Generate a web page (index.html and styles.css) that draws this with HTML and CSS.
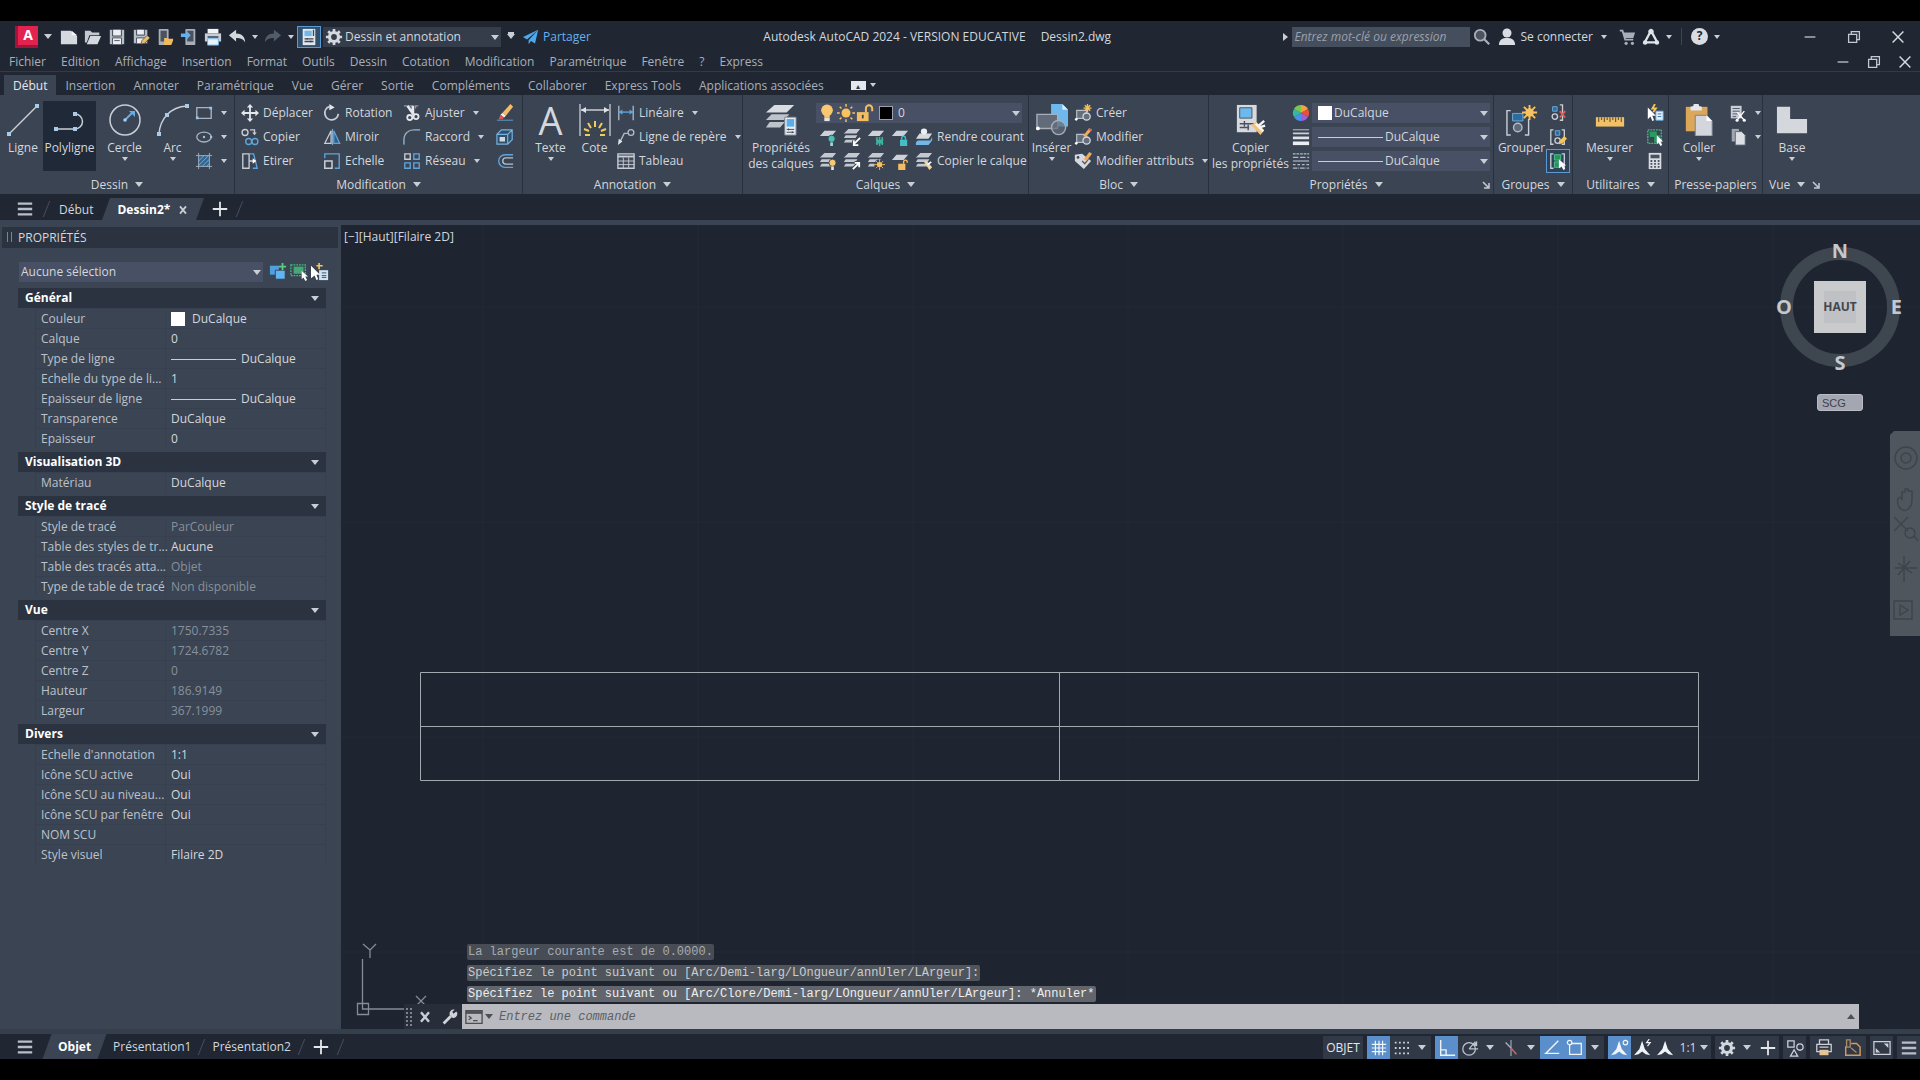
FILE: index.html
```
<!DOCTYPE html>
<html lang="fr">
<head>
    <meta charset="UTF-8">
    <meta name="viewport" content="width=device-width, initial-scale=1.0">
    <title>Autodesk AutoCAD 2024 - Dessin2.dwg</title>
    <link rel="stylesheet" href="styles.css">
</head>
<body>
    <!-- icon set -->
    <svg class="sprite" aria-hidden="true">
        <!-- quick access -->
        <symbol id="i-new" viewBox="0 0 20 20"><path d="M1 3h11l7 6v9H1z" fill="#d4d9e0"/><path d="M13 3l6 5h-6z" fill="#f2f4f7"/></symbol>
        <symbol id="i-open" viewBox="0 0 20 20"><path d="M1 3h6l2 2h8v3H6L3 16H1z" fill="#c4c9d1"/><path d="M7 9h12l-4 9H3z" fill="#d4d9e0"/></symbol>
        <symbol id="i-save" viewBox="0 0 20 20"><path d="M2 2h16v16H2z" fill="#b9bfc8"/><path d="M6 2h8v6H6zM5 11h10v7H5z" fill="#eceef2"/><path d="M5 2v7h10V2M5 18v-7h10v7M7 14h6" fill="none" stroke="#444c5a"/></symbol>
        <symbol id="i-saveas" viewBox="0 0 20 20"><path d="M2 2h15v15H2z" fill="#b9bfc8"/><path d="M6 2h7v5H6zM5 11h9v6H5z" fill="#eceef2"/><path d="M5 2v6h9V2M5 17v-6h9" fill="none" stroke="#444c5a"/><path d="M10 18l1-4 6-6 3 3-6 6z" fill="#e9bd6a" stroke="#2a313c" stroke-width=".7"/></symbol>
        <symbol id="i-webopen" viewBox="0 0 20 20"><rect x="3" y="1" width="11" height="18" rx="1" fill="#a9afb9"/><path d="M5 3h7v12H5z" fill="#4a5260"/><path d="M9 11h4l1 1h5v2l-2 5H9z" fill="#efb95c"/></symbol>
        <symbol id="i-websave" viewBox="0 0 20 20"><rect x="6" y="1" width="11" height="18" rx="1" fill="#a9afb9"/><path d="M8 3h7v12H8z" fill="#4a5260"/><path d="M1 6h6V3l5 5-5 5v-3H1z" fill="#64b0ec"/></symbol>
        <symbol id="i-print" viewBox="0 0 20 20"><path d="M4 1h12v5H4z" fill="#f1f3f5"/><path d="M1 6h18v9H1z" fill="#c9ced6"/><path d="M4 9h12v2H4z" fill="#4e5867"/><path d="M4 12h12v7H4z" fill="#e9f3fb" stroke="#6db4e6"/></symbol>
        <symbol id="i-undo" viewBox="0 0 20 20"><path d="M1 8l8-6v4c6 0 10 3 10 10-2-4-5-5-10-5v4z" fill="#d3d8df"/></symbol>
        <symbol id="i-redo" viewBox="0 0 20 20"><path d="M19 8l-8-6v4C5 6 1 9 1 16c2-4 5-5 10-5v4z" fill="#525b68"/></symbol>
        <symbol id="i-sheet" viewBox="0 0 20 20"><path d="M3 1h14v18H3z" fill="#e3e7ec"/><path d="M5 3h8v6H5z" fill="#6db9ee"/><path d="M15 2v7M5 12h10M5 15h10M8 11v2M12 14v2" stroke="#3b4656" stroke-width="1.5"/></symbol>
        <symbol id="i-gear" viewBox="0 0 20 20"><circle cx="10" cy="10" r="5" fill="none" stroke="currentColor" stroke-width="3.6"/><path d="M10 1v4M10 15v4M1 10h4M15 10h4M3.6 3.6l3 3M13.4 13.4l3 3M16.4 3.6l-3 3M6.6 13.4l-3 3" stroke="currentColor" stroke-width="3"/></symbol>
        <symbol id="i-plane" viewBox="0 0 20 20"><path d="M19 1L0 10l5 3zM19 1L7 14v5l3-4 5 3z" fill="#4fa8ea"/></symbol>
        <symbol id="i-search" viewBox="0 0 20 20"><circle cx="8" cy="8" r="6" fill="#4c5461" stroke="#a9afb9" stroke-width="2"/><path d="M12 12l6 6" stroke="#a9afb9" stroke-width="2.5"/></symbol>
        <symbol id="i-user" viewBox="0 0 20 20"><circle cx="10" cy="5.500" r="5" fill="#d9dde3"/><path d="M1 19c0-6 4-8 9-8s9 2 9 8z" fill="#d9dde3"/></symbol>
        <symbol id="i-cart" viewBox="0 0 20 20"><path d="M2 3h3l3 10h9" fill="none" stroke="#a9afb9" stroke-width="2"/><path d="M5.500 5H19l-2 6H7.500z" fill="#a9afb9"/><circle cx="9" cy="17" r="1.800" fill="#a9afb9"/><circle cx="16" cy="17" r="1.800" fill="#a9afb9"/></symbol>
        <symbol id="i-apps" viewBox="0 0 20 20"><path d="M10 3L3 16h14z" fill="none" stroke="#e1e5ea" stroke-width="2.5"/><circle cx="10" cy="4" r="3" fill="#e1e5ea"/><circle cx="3.5" cy="16" r="2.5" fill="#e1e5ea"/><circle cx="16.5" cy="16" r="2.5" fill="#e1e5ea"/></symbol>
        <symbol id="i-min" viewBox="0 0 20 20"><path d="M4 10h12" stroke="#c5cad2" stroke-width="1.4"/></symbol>
        <symbol id="i-restore" viewBox="0 0 20 20"><path d="M4 7h9v9H4zM7 7V4h9v9h-3" fill="none" stroke="#c5cad2" stroke-width="1.4"/></symbol>
        <symbol id="i-close" viewBox="0 0 20 20"><path d="M4 4l12 12M16 4L4 16" stroke="#d7dbe1" stroke-width="1.6"/></symbol>
        <!-- draw -->
        <symbol id="b-line" viewBox="0 0 32 32"><path d="M2 30L30 2" stroke="#c9ced7" stroke-width="1.5"/><path d="M0 28h4v4H0zM28 0h4v4h-4z" fill="#a8cbea"/></symbol>
        <symbol id="b-poly" viewBox="0 0 32 32"><path d="M1 25h20a7.500 7.500 0 0 0 0-15" fill="none" stroke="#c9ced7" stroke-width="1.5"/><path d="M0 23h4v4H0zM19 23h4v4h-4zM19 8h4v4h-4z" fill="#a8cbea"/></symbol>
        <symbol id="b-circle" viewBox="0 0 32 32"><circle cx="16" cy="16" r="15" fill="none" stroke="#c9ced7" stroke-width="1.5"/><path d="M16 16l8-8" stroke="#64aee8" stroke-width="2"/><path d="M20 7h6v6z" fill="#64aee8"/><circle cx="16" cy="16" r="1.8" fill="#a8cbea"/></symbol>
        <symbol id="b-arc" viewBox="0 0 32 32"><path d="M2 30C3 15 13 3 30 2" fill="none" stroke="#c9ced7" stroke-width="1.5"/><path d="M0 28h4v4H0zM8 9h4v4H8zM28 0h4v4h-4z" fill="#a8cbea"/></symbol>
        <symbol id="i-rect" viewBox="0 0 20 20"><path d="M2 4h16v12H2z" fill="none" stroke="#a9b3c1" stroke-width="1.5"/><path d="M1 14h3v3H1zM16 3h3v3h-3z" fill="#9cc4e6"/></symbol>
        <symbol id="i-ellipse" viewBox="0 0 20 20"><ellipse cx="10" cy="10" rx="8" ry="5.5" fill="none" stroke="#a9b3c1" stroke-width="1.5"/><circle cx="10" cy="10" r="1.3" fill="#9cc4e6"/><circle cx="18" cy="10" r="1.3" fill="#9cc4e6"/></symbol>
        <symbol id="i-hatch" viewBox="0 0 20 20"><path d="M4 4h12v12H4z" fill="#37658c"/><path d="M4 10l6-6M4 15L15 4M8 16l8-8M13 16l3-3" stroke="#68b4ee"/><path d="M4 1v18M16 1v18M1 4h18M1 16h18" stroke="#a9b3c1"/></symbol>
        <!-- modify -->
        <symbol id="i-move" viewBox="0 0 20 20"><path d="M10 2v16M2 10h16" stroke="#e4e7ec" stroke-width="2"/><path d="M10 0l3.500 4h-7zM10 20l3.500-4h-7zM0 10l4-3.500v7zM20 10l-4-3.500v7z" fill="#e4e7ec"/></symbol>
        <symbol id="i-copy" viewBox="0 0 20 20"><g fill="none" stroke="#c9ced7" stroke-width="1.5"><circle cx="4.500" cy="5" r="3.300"/><path d="M10 2h5v4"/></g><path d="M12.500 5h5L15 8z" fill="#c9ced7"/><g fill="none" stroke="#5fa5db" stroke-width="1.5"><circle cx="8.500" cy="15" r="3.300"/><circle cx="15.500" cy="15" r="3.300"/></g></symbol>
        <symbol id="i-stretch" viewBox="0 0 20 20"><path d="M2 2h7v16H2zM9 10h6" fill="none" stroke="#c9ced7" stroke-width="1.5"/><path d="M9 2h5l4 16h-5" fill="none" stroke="#5fa5db" stroke-width="1.5"/><path d="M13 7l4 3-4 3z" fill="#fff"/></symbol>
        <symbol id="i-rotate" viewBox="0 0 20 20"><path d="M7 3a7.500 7.500 0 1 0 10 8" fill="none" stroke="#c9ced7" stroke-width="2"/><path d="M7 0l6 4-6 3z" fill="#e4e7ec"/></symbol>
        <symbol id="i-mirror" viewBox="0 0 20 20"><path d="M9 3v14H2z" fill="none" stroke="#c9ced7" stroke-width="1.4"/><path d="M12 3l6.500 14H12z" fill="#2f5f86" stroke="#5fa5db" stroke-width="1.4"/><path d="M10.500 1v18" stroke="#93b9d8"/></symbol>
        <symbol id="i-scale" viewBox="0 0 20 20"><path d="M2 7V2h16v16h-5" fill="none" stroke="#5fa5db" stroke-width="1.5"/><path d="M2 10h8v8H2z" fill="none" stroke="#c9ced7" stroke-width="1.7"/></symbol>
        <symbol id="i-trim" viewBox="0 0 20 20"><path d="M1 2h18M14 2v3" stroke="#8b95a3" stroke-width="1.4" stroke-dasharray="4 2"/><path d="M5 2l7 10M11 2v9" stroke="#e4e7ec" stroke-width="3"/><g fill="none" stroke="#e4e7ec" stroke-width="2"><circle cx="7.500" cy="15" r="2.800"/><circle cx="14.500" cy="14" r="2.800"/></g></symbol>
        <symbol id="i-fillet" viewBox="0 0 20 20"><path d="M1 18v-5C1 6 6 2 12 2h7" fill="none" stroke="#9aa8b8" stroke-width="1.5"/><path d="M1 19v-6M13 2h6" stroke="#5fa5db"/></symbol>
        <symbol id="i-array" viewBox="0 0 20 20"><path d="M2 2h6v6H2z" fill="none" stroke="#c9ced7" stroke-width="1.5"/><path d="M12 2h6v6h-6zM2 12h6v6H2zM12 12h6v6h-6z" fill="none" stroke="#5fa5db" stroke-width="1.5"/></symbol>
        <symbol id="i-erase" viewBox="0 0 20 20"><path d="M1 18h18" stroke="#5fa5db"/><path d="M7 10L16 0l3 3-8 10z" fill="#f3bd68"/><path d="M7 10l4 3-2 2-4-3z" fill="#f4f4f4"/><path d="M5 12l4 3-2 2H3z" fill="#e1594c"/></symbol>
        <symbol id="i-explode" viewBox="0 0 20 20"><path d="M6 2h12v11l-5 5H1V7zM1 7h12v11M13 7l5-5" fill="#30516d" stroke="#75b2df" stroke-width="1.3"/><path d="M4 10h6v5H4z" fill="#d2d7de"/></symbol>
        <symbol id="i-offset" viewBox="0 0 20 20"><path d="M19 3h-9a7 7 0 0 0 0 14h9" fill="none" stroke="#5fa5db" stroke-width="1.5"/><path d="M19 6.500h-8a3.500 3.500 0 0 0 0 7h8" fill="none" stroke="#b7bfca" stroke-width="1.5"/></symbol>
        <!-- annotation -->
        <symbol id="b-dim" viewBox="0 0 32 32"><path d="M1 0v32M31 0v32M2 6h28" stroke="#c9ced7" stroke-width="1.3"/><path d="M2 6l5-3v6zM30 6l-5-3v6z" fill="#dfe3e8"/><path d="M16 17v6M9 19l3 5M23 19l-3 5M5 25l5 2M27 25l-5 2M6 31h5M21 31h5" stroke="#f2cc5b" stroke-width="2"/></symbol>
        <symbol id="i-linear" viewBox="0 0 20 20"><path d="M2 2v16M18 2v16" stroke="#b3bcc9" stroke-width="1.4"/><path d="M2 9h16" stroke="#5fa5db" stroke-width="1.5"/><path d="M2 9l4-3v6zM18 9l-4-3v6z" fill="#5fa5db"/></symbol>
        <symbol id="i-leader" viewBox="0 0 20 20"><circle cx="15.500" cy="5" r="3.200" fill="none" stroke="#b3bcc9" stroke-width="1.5"/><path d="M12 6H8L3 16" fill="none" stroke="#b3bcc9" stroke-width="1.5"/><path d="M1 19l1-7 4 3z" fill="#dfe3e8"/></symbol>
        <symbol id="i-table" viewBox="0 0 20 20"><path d="M1 2h18v16H1z" fill="#414b5a" stroke="#c9ced7" stroke-width="1.5"/><path d="M1 4h18v2H1z" fill="#c9ced7"/><path d="M1 10h18M1 14h18M7 6v12M13 6v12" stroke="#c9ced7"/></symbol>
        <!-- layers -->
        <symbol id="b-layers" viewBox="0 0 34 34"><path d="M10 1h21l-8 8H1z" fill="#d9dce1"/><path d="M7 11h19l-6 6H1zM5 19h16l-5 6H1z" fill="#bfc4cb"/><path d="M21 14h12v19H21z" fill="#e8ebef" stroke="#7d8794"/><path d="M23 16h8v8h-8z" fill="#58aeea"/><path d="M23 27h8M23 30h8M25 26v2M29 29v2" stroke="#3c4655"/></symbol>
        <symbol id="i-bulb" viewBox="0 0 20 20"><circle cx="10" cy="7" r="6.500" fill="#f9c672"/><path d="M7 12h6v3H7z" fill="#f9c672"/><path d="M7 15h6v4H7z" fill="#e6e3dc"/></symbol>
        <symbol id="i-sun" viewBox="0 0 20 20"><circle cx="10" cy="10" r="5" fill="#f9c25f"/><path d="M10 0v3M10 17v3M0 10h3M17 10h3M3 3l2 2M15 15l2 2M17 3l-2 2M5 15l-2 2" stroke="#f9c25f" stroke-width="1.6"/></symbol>
        <symbol id="i-unlock" viewBox="0 0 20 20"><path d="M1 9h13v10H1z" fill="#f3bd62"/><path d="M11 9V5a3.500 3.500 0 0 1 7 0v3" fill="none" stroke="#f3bd62" stroke-width="2.2"/><path d="M7.500 12v4" stroke="#3b4453" stroke-width="2"/></symbol>
        <symbol id="i-one" viewBox="0 0 20 20"><path d="M6 3h13l-5 6H1z" fill="#cdd2d9"/></symbol>
        <symbol id="i-stack" viewBox="0 0 20 20"><path d="M6 1h13l-4 5H1zM3 8h13l-2 3H1zM3 13h12l-2 3H1z" fill="#c4c9d1"/></symbol>
        <symbol id="i-loff" viewBox="0 0 20 20"><use href="#i-one"/><circle cx="14" cy="12" r="4" fill="#4ac0b4" stroke="#3b4453"/><path d="M12.500 16h3v4h-3z" fill="#9edbd4"/></symbol>
        <symbol id="i-liso" viewBox="0 0 20 20"><use href="#i-stack"/><path d="M19 11l-7 7M12 14v5h5" fill="none" stroke="#3b4453" stroke-width="4"/><path d="M19 11l-7 7M12 14v5h5" fill="none" stroke="#fff" stroke-width="2"/></symbol>
        <symbol id="i-lfreeze" viewBox="0 0 20 20"><use href="#i-one"/><path d="M14 10v10M10 12l8 6M18 12l-8 6M11 10v9M17 10v9" stroke="#3db39f" stroke-width="1.7"/></symbol>
        <symbol id="i-llock" viewBox="0 0 20 20"><use href="#i-one"/><path d="M10 13h8v7h-8z" fill="#45bfc3"/><path d="M12 13v-2a2 2 0 0 1 4 0v2" fill="none" stroke="#45bfc3" stroke-width="1.6"/></symbol>
        <symbol id="i-lcur" viewBox="0 0 20 20"><path d="M5 6h14l-4 6H1z" fill="#d5dae0"/><path d="M3 14h14l2-4v4l-4 5H1v-3z" fill="#72b7e8"/><circle cx="10" cy="4" r="3.500" fill="#eceff2"/></symbol>
        <symbol id="i-lon" viewBox="0 0 20 20"><use href="#i-stack"/><circle cx="15" cy="12" r="4" fill="#f9c672" stroke="#3b4453"/><path d="M13.500 16h3v4h-3z" fill="#e6e3dc"/></symbol>
        <symbol id="i-luniso" viewBox="0 0 20 20"><use href="#i-stack"/><path d="M11 19l7-7M13 12h5v5" fill="none" stroke="#3b4453" stroke-width="4"/><path d="M11 19l7-7M13 12h5v5" fill="none" stroke="#fff" stroke-width="2"/></symbol>
        <symbol id="i-lthaw" viewBox="0 0 20 20"><use href="#i-stack"/><circle cx="14" cy="14" r="6" fill="#3b4453"/><circle cx="14" cy="14" r="3" fill="#f9c25f"/><path d="M14 8v3M14 17v3M8 14h3M17 14h3M10 10l2 2M18 10l-2 2M10 18l2-2M18 18l-2-2" stroke="#f9c25f"/></symbol>
        <symbol id="i-lunlock" viewBox="0 0 20 20"><use href="#i-one"/><path d="M8 13h8v7H8z" fill="#f3bd62"/><path d="M14 13v-2a2 2 0 0 1 4 0v1" fill="none" stroke="#f3bd62" stroke-width="1.6"/></symbol>
        <symbol id="i-lmatch" viewBox="0 0 20 20"><use href="#i-stack"/><path d="M10 11l3-1 6 7-3 3z" fill="#f0d7a4"/><path d="M14 14l4-3" stroke="#fff" stroke-width="2"/></symbol>
        <!-- block -->
        <symbol id="b-insert" viewBox="0 0 34 34"><path d="M16 0h12l6 6v18H16z" fill="#6db9ee"/><path d="M28 0v6h6z" fill="#d7ecfa"/><path d="M1 11h22v15H1z" fill="#626b79" stroke="#a7aeb9" stroke-width="1.5"/><circle cx="24" cy="25" r="7.500" fill="#626b79" fill-opacity=".7" stroke="#a7aeb9" stroke-width="1.5"/><circle cx="2" cy="26" r="2" fill="#fff"/></symbol>
        <symbol id="i-blk" viewBox="0 0 20 20"><path d="M3 7h11v9H3z" fill="#646e7c" stroke="#b7bec8" stroke-width="1.3"/><circle cx="14" cy="14" r="4" fill="#646e7c" stroke="#d5d9df" stroke-width="1.4"/><circle cx="2.500" cy="17" r="1.500" fill="#fff"/></symbol>
        <symbol id="i-bcreate" viewBox="0 0 20 20"><use href="#i-blk"/><path d="M15 0v9M10.500 4.500h9M12 1.500l6 6M18 1.500l-6 6" stroke="#f6bf5c" stroke-width="1.5"/></symbol>
        <symbol id="i-bedit" viewBox="0 0 20 20"><use href="#i-blk"/><path d="M10 9l7-9 3 2-7 8z" fill="#f1ab57"/><path d="M17 0l3 2-1 2-3-2z" fill="#e35e4f"/></symbol>
        <symbol id="i-battr" viewBox="0 0 20 20"><path d="M1 3l8-1 10 8-8 9L1 10z" fill="#d6dae0"/><circle cx="4.500" cy="6" r="1.500" fill="#3b4453"/><path d="M9 10l3 3 4-5" fill="none" stroke="#4e5867" stroke-width="1.5"/><path d="M11 8l6-8 3 2-6 8z" fill="#f1ab57"/></symbol>
        <!-- properties -->
        <symbol id="b-match" viewBox="0 0 34 34"><path d="M2 1h21v29H2z" fill="#d6d9de"/><path d="M5 4h13v11H5z" fill="#6db9ee" stroke="#4a5260"/><path d="M5 21h15M5 25h10M10 18v6M14 22v6" stroke="#4a5260" stroke-width="1.5"/><path d="M17 22l6-3 8 9-4 5z" fill="#f1c27a"/><path d="M24 24l7-6M25 25l7-2M22 21l8 8" stroke="#f4f5f7" stroke-width="2.5"/></symbol>
        <symbol id="i-wheel" viewBox="0 0 20 20"><path d="M10 10V1a9 9 0 0 1 7.800 4.500z" fill="#f2a33b"/><path d="M10 10l7.800-4.500a9 9 0 0 1 0 9z" fill="#e8503e"/><path d="M10 10l7.800 4.500A9 9 0 0 1 10 19z" fill="#a15fd0"/><path d="M10 10v9a9 9 0 0 1-7.800-4.500z" fill="#4a8fe8"/><path d="M10 10l-7.800 4.500a9 9 0 0 1 0-9z" fill="#35b8a4"/><path d="M10 10L2.200 5.500A9 9 0 0 1 10 1z" fill="#7bc650"/></symbol>
        <symbol id="i-weight" viewBox="0 0 20 20"><path d="M1 2h18" stroke="#c9ced7"/><path d="M1 6h18" stroke="#c9ced7" stroke-width="2"/><path d="M1 11h18" stroke="#dfe3e8" stroke-width="3"/><path d="M1 17h18" stroke="#eceff2" stroke-width="4"/></symbol>
        <symbol id="i-ltype" viewBox="0 0 20 20"><g stroke="#b3bac5" stroke-width="1.3"><path d="M1 2h18" stroke-dasharray="3 1"/><path d="M1 6h18" stroke-dasharray="6 2"/><path d="M1 10h18"/><path d="M1 14h18" stroke-dasharray="3 2"/><path d="M1 18h18" stroke-dasharray="5 1 1 1"/></g></symbol>
        <!-- groups -->
        <symbol id="b-group" viewBox="0 0 34 34"><path d="M5 7H1v26h4M20 33h4V16" fill="none" stroke="#c9ced7" stroke-width="1.5"/><path d="M7 10h11v8H7z" fill="#2f6c9e" stroke="#6db0df"/><circle cx="12.500" cy="25" r="4.500" fill="#5f6977" stroke="#b3bac5" stroke-width="1.5"/><path d="M25 1v16M17 9h16M19 3l12 12M31 3L19 15" stroke="#f8c261" stroke-width="2"/><circle cx="25" cy="9" r="4.500" fill="#f8c261"/></symbol>
        <symbol id="i-grp" viewBox="0 0 20 20"><path d="M5 2H2v16h3M14 2h3v16h-3" fill="none" stroke="#c9ced7" stroke-width="1.5"/><path d="M7 3h5v5H7z" fill="#2f6c9e" stroke="#6db0df"/><circle cx="9.500" cy="14" r="3" fill="none" stroke="#c9ced7" stroke-width="1.5"/></symbol>
        <symbol id="i-ungroup" viewBox="0 0 20 20"><path d="M12 1h3v17h-3" fill="none" stroke="#c9ced7" stroke-width="1.5"/><path d="M4 3h5v5H4z" fill="#2f6c9e" stroke="#6db0df"/><circle cx="6.500" cy="14" r="3" fill="none" stroke="#c9ced7" stroke-width="1.5"/><path d="M12 8l6 7M18 8l-6 7" stroke="#e75b50" stroke-width="2"/></symbol>
        <symbol id="i-gedit" viewBox="0 0 20 20"><use href="#i-grp"/><path d="M11 18l1-4 5-5 3 3-5 5z" fill="#f4c65d"/></symbol>
        <symbol id="i-gsel" viewBox="0 0 20 20"><path d="M5 2H2v16h3M14 2h3v16" fill="none" stroke="#c9ced7" stroke-width="1.5"/><path d="M6 3h7v6H6zM6 11h7v6H6z" fill="#27935e" stroke="#4fc98b"/><path d="M11 8v10l3-2 2 4 2-1-2-4h3z" fill="#fff"/></symbol>
        <!-- utilities -->
        <symbol id="b-ruler" viewBox="0 0 34 34"><path d="M2 14h30v10H2z" fill="#f2c167"/><path d="M5 14v5M8 14v3M11 14v5M14 14v3M17 14v5M20 14v3M23 14v5M26 14v3M29 14v5" stroke="#6a5530" stroke-width="1.2"/></symbol>
        <symbol id="i-quick" viewBox="0 0 20 20"><path d="M11 8h8v10h-8z" fill="#e6f0fa" stroke="#69b0e6"/><path d="M13 11h4M13 14h4" stroke="#2f6c9e"/><path d="M10 0L7 5h4L8 9" fill="none" stroke="#f4c65d" stroke-width="2"/><path d="M2 4v13l3-3 2 5 2-1-2-5h4z" fill="#fff"/></symbol>
        <symbol id="i-selall" viewBox="0 0 20 20"><path d="M2 2h15v15H2z" fill="none" stroke="#3fbb79" stroke-width="1.5" stroke-dasharray="2 1"/><path d="M4 4h8v6H4zM9 8h7v8H9z" fill="#2a9a60"/><path d="M12 8v10l2-2 2 4 2-1-2-4h3z" fill="#fff"/></symbol>
        <symbol id="i-calc" viewBox="0 0 20 20"><path d="M3 1h14v18H3z" fill="#d9dce1"/><path d="M5 3h10v4H5z" fill="#4a5260"/><path d="M6 9v9M10 9v9M14 9v9" stroke="#4a5260" stroke-width="2" stroke-dasharray="2 1.3"/></symbol>
        <!-- clipboard and view -->
        <symbol id="b-paste" viewBox="0 0 34 34"><path d="M3 3h23v26H3z" fill="#dda75a"/><path d="M8 3l3-1a3 3 0 0 1 6 0l3 1v4H8z" fill="#e4e7ec"/><path d="M13 12h12l6 6v16H13z" fill="#d3d7dd" stroke="#747e8b"/><path d="M25 12v6h6z" fill="#fff"/></symbol>
        <symbol id="i-cut" viewBox="0 0 20 20"><path d="M2 2h12v14H2z" fill="#c9ced7"/><path d="M4 5h8M4 8h8M4 11h6M4 14h4" stroke="#4a5260"/><path d="M9 9l8 9M17 8l-8 10" stroke="#fff" stroke-width="1.5"/><circle cx="9" cy="18" r="1.700" fill="#fff"/><circle cx="17" cy="18" r="1.700" fill="#fff"/></symbol>
        <symbol id="i-copyclip" viewBox="0 0 20 20"><path d="M3 1h8v14H3z" fill="#9fa6b1"/><path d="M7 4h7l4 4v11H7z" fill="#dcdfe4" stroke="#59626f"/></symbol>
        <symbol id="b-base" viewBox="0 0 34 34"><path d="M1 3h14v13h18v15H1z" fill="#d4d8dd"/></symbol>
        <!-- property palette -->
        <symbol id="i-ptog" viewBox="0 0 20 20"><path d="M1 3h10v10H1z" fill="#4fa0e0"/><path d="M7 8h11v10H7z" fill="#63b5f2" stroke="#34404f"/><path d="M15 0v8M11 4h8" stroke="#58cf7f" stroke-width="2"/></symbol>
        <symbol id="i-psel" viewBox="0 0 20 20"><path d="M1 2h16v12H1z" fill="none" stroke="#3fbb79" stroke-width="1.5" stroke-dasharray="2 1"/><path d="M4 4h11v8H4z" fill="#45a876"/><path d="M13 9v9l2-2 2 4 2-1-2-4h3z" fill="#fff"/></symbol>
        <symbol id="i-pquick" viewBox="0 0 20 20"><path d="M9 8h10v11H9z" fill="#cfe3f5"/><path d="M12 11h5M12 14h5M12 16h5" stroke="#30465e"/><path d="M9 0v7M6 3h7" stroke="#f4c65d" stroke-width="1.8"/><path d="M0 3v14l4-3 2 5 2-1-2-5h4z" fill="#fff"/></symbol>
        <!-- status bar -->
        <symbol id="s-grid" viewBox="0 0 20 20"><path d="M6 2v16M10 2v16M14 2v16M2 6h16M2 10h16M2 14h16" stroke="#f0f4f8" stroke-width="1.3"/></symbol>
        <symbol id="s-snap" viewBox="0 0 20 20"><path d="M2 4h16M2 10h16M2 16h16" stroke="#cdd2da" stroke-width="2" stroke-dasharray="2 2.6"/></symbol>
        <symbol id="s-ortho" viewBox="0 0 20 20"><path d="M3 1v17h16M3 12h6v6" fill="none" stroke="#f0f4f8" stroke-width="1.5"/></symbol>
        <symbol id="s-polar" viewBox="0 0 20 20"><circle cx="9" cy="11" r="7" fill="none" stroke="#bfc5ce" stroke-width="1.4"/><path d="M9 11h10M9 11l7-8" stroke="#bfc5ce" stroke-width="1.4"/><path d="M13 7l5-5v6z" fill="#bfc5ce"/></symbol>
        <symbol id="s-iso" viewBox="0 0 20 20"><path d="M10 1v18" stroke="#8fa0b0" stroke-width="1.4"/><path d="M4 4l6 6" stroke="#a9b0bb" stroke-width="1.5"/><path d="M10 10l6 7" stroke="#d0665f" stroke-width="1.6"/></symbol>
        <symbol id="s-track" viewBox="0 0 20 20"><path d="M17 2L3 16h15" fill="none" stroke="#f0f4f8" stroke-width="1.5"/></symbol>
        <symbol id="s-osnap" viewBox="0 0 20 20"><path d="M4 5h13v12H4z" fill="none" stroke="#f0f4f8" stroke-width="1.4"/><circle cx="4" cy="4" r="2.500" fill="#5b8fcb" stroke="#f0f4f8" stroke-width="1.3"/></symbol>
        <symbol id="s-ann" viewBox="0 0 20 20"><path d="M9 2l3 9 6 7-5-1-4-3-4 3-5 1 6-7z" fill="#f0f4f8"/></symbol>
        <symbol id="s-ann1" viewBox="0 0 20 20"><use href="#s-ann"/><circle cx="16" cy="4" r="2.500" fill="none" stroke="#f0f4f8" stroke-width="1.3"/></symbol>
        <symbol id="s-ann2" viewBox="0 0 20 20"><use href="#s-ann"/><path d="M17 0l-3 4h4l-3 4" fill="none" stroke="#f0f4f8" stroke-width="1.3"/></symbol>
        <symbol id="s-plus" viewBox="0 0 20 20"><path d="M10 2v16M2 10h16" stroke="#e4e7ec" stroke-width="2"/></symbol>
        <symbol id="s-shapes" viewBox="0 0 20 20"><g fill="none" stroke="#cdd2da" stroke-width="1.4"><path d="M2 2h7v7H2zM9 12l4 7H5z"/><circle cx="15.500" cy="9" r="3.500"/></g></symbol>
        <symbol id="s-print" viewBox="0 0 20 20"><path d="M5 6V1h10v5M2 6h16v8H2zM5 9h10" fill="none" stroke="#cdd2da" stroke-width="1.4"/><path d="M5 12h10v6H5z" fill="#e7c497"/></symbol>
        <symbol id="s-link" viewBox="0 0 20 20"><path d="M3 8v10h16V9l-4-4H9" fill="none" stroke="#d09c5f" stroke-width="1.6"/><path d="M4 1h4v8H4zM9 10l6 5" fill="none" stroke="#a98a66" stroke-width="1.5"/></symbol>
        <symbol id="s-full" viewBox="0 0 20 20"><path d="M1 3h18v14H1z" fill="none" stroke="#cdd2da" stroke-width="1.4"/><path d="M12 5h5v5zM3 10v5h5z" fill="#cdd2da"/></symbol>
        <symbol id="i-burger" viewBox="0 0 20 20"><path d="M2 4h16M2 10h16M2 16h16" stroke="#b9bfc9" stroke-width="2.6"/></symbol>
        <symbol id="i-x" viewBox="0 0 20 20"><path d="M5 4l10 12M15 4L5 16" stroke="#c9ced6" stroke-width="3"/></symbol>
        <symbol id="i-wrench" viewBox="0 0 20 20"><path d="M2 18l9-9" stroke="#d0d4da" stroke-width="3.5"/><path d="M18 3l-4 3-1-3 3-2a5 5 0 0 0-6 7l3 3a5 5 0 0 0 5-8z" fill="#d0d4da"/></symbol>
        <symbol id="i-term" viewBox="0 0 20 20"><path d="M1 3h18v14H1z" fill="none" stroke="#4c4f54" stroke-width="1.5"/><path d="M1 5h18" stroke="#4c4f54" stroke-width="3"/><path d="M4 9l3 2-3 2M9 14h5" fill="none" stroke="#4c4f54" stroke-width="1.4"/></symbol>
        <symbol id="i-dlg" viewBox="0 0 10 10"><path d="M2 2l5 5M8 3v5H3" fill="none" stroke="#c5cad2" stroke-width="1.5"/></symbol>
    </svg>

    <div class="app">
        <header class="titlebar">
            <div class="quick">
                <button class="logo" aria-label="Application">A</button>
                <button class="drop" aria-label="Menu"><i class="caret"></i></button>
                <button class="slot" aria-label="Nouveau"><svg class="ico"><use href="#i-new"/></svg></button>
                <button class="slot" aria-label="Ouvrir"><svg class="ico"><use href="#i-open"/></svg></button>
                <button class="slot" aria-label="Enregistrer"><svg class="ico"><use href="#i-save"/></svg></button>
                <button class="slot" aria-label="Enregistrer sous"><svg class="ico"><use href="#i-saveas"/></svg></button>
                <button class="slot" aria-label="Ouvrir depuis le Web"><svg class="ico"><use href="#i-webopen"/></svg></button>
                <button class="slot" aria-label="Enregistrer sur le Web"><svg class="ico"><use href="#i-websave"/></svg></button>
                <button class="slot" aria-label="Tracer"><svg class="ico"><use href="#i-print"/></svg></button>
                <button class="slot" aria-label="Annuler"><svg class="ico"><use href="#i-undo"/></svg></button>
                <button class="drop" aria-label="Historique"><i class="caret small"></i></button>
                <button class="slot" aria-label="Rétablir"><svg class="ico"><use href="#i-redo"/></svg></button>
                <button class="drop" aria-label="Historique"><i class="caret small"></i></button>
                <button class="slot on" aria-label="Feuilles"><svg class="ico"><use href="#i-sheet"/></svg></button>
                <label class="combo workspace">
                    <svg class="ico"><use href="#i-gear"/></svg>
                    <select aria-label="Espace de travail"><option>Dessin et annotation</option></select>
                </label>
                <button class="drop more" aria-label="Personnaliser"><i class="caret"></i></button>
                <a class="share" href="#"><svg class="ico"><use href="#i-plane"/></svg>Partager</a>
            </div>
            <div class="doc-title"><span>Autodesk AutoCAD 2024 - VERSION EDUCATIVE</span><span>Dessin2.dwg</span></div>
            <div class="account">
                <i class="caret side"></i>
                <input class="search" type="text" aria-label="Rechercher" placeholder="Entrez mot-clé ou expression">
                <button class="slot" aria-label="Rechercher"><svg class="ico"><use href="#i-search"/></svg></button>
                <button class="login"><svg class="ico"><use href="#i-user"/></svg>Se connecter</button>
                <button class="drop wide" aria-label="Compte"><i class="caret small"></i></button>
                <button class="slot" aria-label="Boutique"><svg class="ico"><use href="#i-cart"/></svg></button>
                <button class="slot" aria-label="Applications"><svg class="ico"><use href="#i-apps"/></svg></button>
                <button class="drop" aria-label="Applications"><i class="caret small"></i></button>
                <button class="help" aria-label="Aide"><span>?</span></button>
                <button class="drop" aria-label="Aide"><i class="caret small"></i></button>
                <div class="win-buttons">
                    <button aria-label="Réduire"><svg class="ico"><use href="#i-min"/></svg></button>
                    <button aria-label="Restaurer"><svg class="ico"><use href="#i-restore"/></svg></button>
                    <button aria-label="Fermer"><svg class="ico"><use href="#i-close"/></svg></button>
                </div>
            </div>
        </header>

        <div class="menubar">
            <nav>
                <a href="#">Fichier</a><a href="#">Edition</a><a href="#">Affichage</a><a href="#">Insertion</a><a href="#">Format</a><a href="#">Outils</a><a href="#">Dessin</a><a href="#">Cotation</a><a href="#">Modification</a><a href="#">Paramétrique</a><a href="#">Fenêtre</a><a href="#">?</a><a href="#">Express</a>
            </nav>
            <div class="win-buttons doc">
                <button aria-label="Réduire"><svg class="ico"><use href="#i-min"/></svg></button>
                <button aria-label="Restaurer"><svg class="ico"><use href="#i-restore"/></svg></button>
                <button aria-label="Fermer"><svg class="ico"><use href="#i-close"/></svg></button>
            </div>
        </div>

        <nav class="ribbon-tabs">
            <a class="active" href="#">Début</a><a href="#">Insertion</a><a href="#">Annoter</a><a href="#">Paramétrique</a><a href="#">Vue</a><a href="#">Gérer</a><a href="#">Sortie</a><a href="#">Compléments</a><a href="#">Collaborer</a><a href="#">Express Tools</a><a href="#">Applications associées</a>
            <button class="collapse" aria-label="Réduire le ruban"><span>▴</span><i class="caret small"></i></button>
        </nav>

        <div class="ribbon">
            <section class="panel draw">
                <div class="panel-body">
                    <button class="big"><svg><use href="#b-line"/></svg>Ligne</button>
                    <button class="big pressed"><svg><use href="#b-poly"/></svg>Polyligne</button>
                    <button class="big"><svg><use href="#b-circle"/></svg>Cercle<i class="caret small"></i></button>
                    <button class="big"><svg><use href="#b-arc"/></svg>Arc<i class="caret small"></i></button>
                    <div class="col">
                        <button class="cmd" aria-label="Rectangle"><svg class="ico"><use href="#i-rect"/></svg><i class="caret small"></i></button>
                        <button class="cmd" aria-label="Ellipse"><svg class="ico"><use href="#i-ellipse"/></svg><i class="caret small"></i></button>
                        <button class="cmd" aria-label="Hachures"><svg class="ico"><use href="#i-hatch"/></svg><i class="caret small"></i></button>
                    </div>
                </div>
                <button class="panel-title">Dessin<i class="caret"></i></button>
            </section>

            <section class="panel modify">
                <div class="panel-body">
                    <div class="col">
                        <button class="cmd"><svg class="ico"><use href="#i-move"/></svg>Déplacer</button>
                        <button class="cmd"><svg class="ico"><use href="#i-copy"/></svg>Copier</button>
                        <button class="cmd"><svg class="ico"><use href="#i-stretch"/></svg>Etirer</button>
                    </div>
                    <div class="col">
                        <button class="cmd"><svg class="ico"><use href="#i-rotate"/></svg>Rotation</button>
                        <button class="cmd"><svg class="ico"><use href="#i-mirror"/></svg>Miroir</button>
                        <button class="cmd"><svg class="ico"><use href="#i-scale"/></svg>Echelle</button>
                    </div>
                    <div class="col">
                        <button class="cmd"><svg class="ico"><use href="#i-trim"/></svg>Ajuster<i class="caret small"></i></button>
                        <button class="cmd"><svg class="ico"><use href="#i-fillet"/></svg>Raccord<i class="caret small"></i></button>
                        <button class="cmd"><svg class="ico"><use href="#i-array"/></svg>Réseau<i class="caret small"></i></button>
                    </div>
                    <div class="col">
                        <button class="cmd" aria-label="Effacer"><svg class="ico"><use href="#i-erase"/></svg></button>
                        <button class="cmd" aria-label="Décomposer"><svg class="ico"><use href="#i-explode"/></svg></button>
                        <button class="cmd" aria-label="Décaler"><svg class="ico"><use href="#i-offset"/></svg></button>
                    </div>
                </div>
                <button class="panel-title">Modification<i class="caret"></i></button>
            </section>

            <section class="panel annotate">
                <div class="panel-body">
                    <button class="big"><span class="letter">A</span>Texte<i class="caret small"></i></button>
                    <button class="big"><svg><use href="#b-dim"/></svg>Cote</button>
                    <div class="col">
                        <button class="cmd"><svg class="ico"><use href="#i-linear"/></svg>Linéaire<i class="caret small"></i></button>
                        <button class="cmd"><svg class="ico"><use href="#i-leader"/></svg>Ligne de repère<i class="caret small"></i></button>
                        <button class="cmd"><svg class="ico"><use href="#i-table"/></svg>Tableau</button>
                    </div>
                </div>
                <button class="panel-title">Annotation<i class="caret"></i></button>
            </section>

            <section class="panel layers">
                <div class="panel-body">
                    <button class="big"><svg><use href="#b-layers"/></svg>Propriétés<br>des calques</button>
                    <div class="col">
                        <label class="combo layer">
                            <svg class="ico"><use href="#i-bulb"/></svg>
                            <svg class="ico"><use href="#i-sun"/></svg>
                            <svg class="ico"><use href="#i-unlock"/></svg>
                            <span class="swatch black"></span>
                            <select aria-label="Calque courant"><option>0</option></select>
                        </label>
                        <div class="tools">
                            <button class="slot" aria-label="Désactiver"><svg class="ico"><use href="#i-loff"/></svg></button>
                            <button class="slot" aria-label="Isoler"><svg class="ico"><use href="#i-liso"/></svg></button>
                            <button class="slot" aria-label="Geler"><svg class="ico"><use href="#i-lfreeze"/></svg></button>
                            <button class="slot" aria-label="Verrouiller"><svg class="ico"><use href="#i-llock"/></svg></button>
                            <button class="cmd"><svg class="ico"><use href="#i-lcur"/></svg>Rendre courant</button>
                        </div>
                        <div class="tools">
                            <button class="slot" aria-label="Activer"><svg class="ico"><use href="#i-lon"/></svg></button>
                            <button class="slot" aria-label="Annuler l'isolation"><svg class="ico"><use href="#i-luniso"/></svg></button>
                            <button class="slot" aria-label="Libérer"><svg class="ico"><use href="#i-lthaw"/></svg></button>
                            <button class="slot" aria-label="Déverrouiller"><svg class="ico"><use href="#i-lunlock"/></svg></button>
                            <button class="cmd"><svg class="ico"><use href="#i-lmatch"/></svg>Copier le calque</button>
                        </div>
                    </div>
                </div>
                <button class="panel-title">Calques<i class="caret"></i></button>
            </section>

            <section class="panel block">
                <div class="panel-body">
                    <button class="big"><svg><use href="#b-insert"/></svg>Insérer<i class="caret small"></i></button>
                    <div class="col">
                        <button class="cmd"><svg class="ico"><use href="#i-bcreate"/></svg>Créer</button>
                        <button class="cmd"><svg class="ico"><use href="#i-bedit"/></svg>Modifier</button>
                        <button class="cmd"><svg class="ico"><use href="#i-battr"/></svg>Modifier attributs<i class="caret small"></i></button>
                    </div>
                </div>
                <button class="panel-title">Bloc<i class="caret"></i></button>
            </section>

            <section class="panel props">
                <div class="panel-body">
                    <button class="big"><svg><use href="#b-match"/></svg>Copier<br>les propriétés</button>
                    <div class="col">
                        <div class="prop-line"><svg class="ico"><use href="#i-wheel"/></svg>
                            <label class="combo"><span class="swatch"></span><select aria-label="Couleur"><option>DuCalque</option></select></label></div>
                        <div class="prop-line"><svg class="ico"><use href="#i-weight"/></svg>
                            <label class="combo"><span class="stroke"></span><select aria-label="Epaisseur de ligne"><option>DuCalque</option></select></label></div>
                        <div class="prop-line"><svg class="ico"><use href="#i-ltype"/></svg>
                            <label class="combo"><span class="stroke"></span><select aria-label="Type de ligne"><option>DuCalque</option></select></label></div>
                    </div>
                </div>
                <button class="panel-title">Propriétés<i class="caret"></i></button>
                <button class="launcher" aria-label="Palette Propriétés"><svg><use href="#i-dlg"/></svg></button>
            </section>

            <section class="panel groups">
                <div class="panel-body">
                    <button class="big"><svg><use href="#b-group"/></svg>Grouper</button>
                    <div class="col">
                        <button class="slot" aria-label="Dissocier"><svg class="ico"><use href="#i-ungroup"/></svg></button>
                        <button class="slot" aria-label="Modifier le groupe"><svg class="ico"><use href="#i-gedit"/></svg></button>
                        <button class="slot on" aria-label="Sélection de groupe"><svg class="ico"><use href="#i-gsel"/></svg></button>
                    </div>
                </div>
                <button class="panel-title">Groupes<i class="caret"></i></button>
            </section>

            <section class="panel utils">
                <div class="panel-body">
                    <button class="big"><svg><use href="#b-ruler"/></svg>Mesurer<i class="caret small"></i></button>
                    <div class="col">
                        <button class="slot" aria-label="Sélection rapide"><svg class="ico"><use href="#i-quick"/></svg></button>
                        <button class="slot" aria-label="Tout sélectionner"><svg class="ico"><use href="#i-selall"/></svg></button>
                        <button class="slot" aria-label="Calculatrice"><svg class="ico"><use href="#i-calc"/></svg></button>
                    </div>
                </div>
                <button class="panel-title">Utilitaires<i class="caret"></i></button>
            </section>

            <section class="panel clip">
                <div class="panel-body">
                    <button class="big"><svg><use href="#b-paste"/></svg>Coller<i class="caret small"></i></button>
                    <div class="col">
                        <button class="cmd" aria-label="Couper"><svg class="ico"><use href="#i-cut"/></svg><i class="caret small"></i></button>
                        <button class="cmd" aria-label="Copier"><svg class="ico"><use href="#i-copyclip"/></svg><i class="caret small"></i></button>
                    </div>
                </div>
                <button class="panel-title">Presse-papiers</button>
            </section>

            <section class="panel view">
                <div class="panel-body">
                    <button class="big"><svg><use href="#b-base"/></svg>Base<i class="caret small"></i></button>
                </div>
                <button class="panel-title">Vue<i class="caret"></i></button>
                <button class="launcher" aria-label="Options de vue"><svg><use href="#i-dlg"/></svg></button>
            </section>
        </div>

        <div class="tabs files">
            <button class="burger" aria-label="Dessins ouverts"><svg class="ico"><use href="#i-burger"/></svg></button>
            <i class="slash"></i>
            <button class="tab">Début</button>
            <button class="tab active">Dessin2*<svg class="tab-close"><use href="#i-x"/></svg></button>
            <button class="add" aria-label="Nouveau dessin"><svg class="ico"><use href="#s-plus"/></svg></button>
            <i class="slash"></i>
        </div>

        <main class="workspace-area">
            <aside class="palette">
                <h2>PROPRIÉTÉS</h2>
                <div class="palette-tools">
                    <label class="combo"><select aria-label="Sélection"><option>Aucune sélection</option></select></label>
                    <button aria-label="PICKADD"><svg class="ico"><use href="#i-ptog"/></svg></button>
                    <button aria-label="Choisir les objets"><svg class="ico"><use href="#i-psel"/></svg></button>
                    <button aria-label="Sélection rapide"><svg class="ico"><use href="#i-pquick"/></svg></button>
                </div>

                <h3>Général<i class="caret"></i></h3>
                <table>
                    <tr><th>Couleur</th><td><span class="swatch"></span>DuCalque</td></tr>
                    <tr><th>Calque</th><td>0</td></tr>
                    <tr><th>Type de ligne</th><td><span class="stroke"></span>DuCalque</td></tr>
                    <tr><th>Echelle du type de li...</th><td>1</td></tr>
                    <tr><th>Epaisseur de ligne</th><td><span class="stroke"></span>DuCalque</td></tr>
                    <tr><th>Transparence</th><td>DuCalque</td></tr>
                    <tr><th>Epaisseur</th><td>0</td></tr>
                </table>

                <h3>Visualisation 3D<i class="caret"></i></h3>
                <table>
                    <tr><th>Matériau</th><td>DuCalque</td></tr>
                </table>

                <h3>Style de tracé<i class="caret"></i></h3>
                <table>
                    <tr><th>Style de tracé</th><td class="off">ParCouleur</td></tr>
                    <tr><th>Table des styles de tr...</th><td>Aucune</td></tr>
                    <tr><th>Table des tracés atta...</th><td class="off">Objet</td></tr>
                    <tr><th>Type de table de tracé</th><td class="off">Non disponible</td></tr>
                </table>

                <h3>Vue<i class="caret"></i></h3>
                <table>
                    <tr><th>Centre X</th><td class="off">1750.7335</td></tr>
                    <tr><th>Centre Y</th><td class="off">1724.6782</td></tr>
                    <tr><th>Centre Z</th><td class="off">0</td></tr>
                    <tr><th>Hauteur</th><td class="off">186.9149</td></tr>
                    <tr><th>Largeur</th><td class="off">367.1999</td></tr>
                </table>

                <h3>Divers<i class="caret"></i></h3>
                <table>
                    <tr><th>Echelle d'annotation</th><td>1:1</td></tr>
                    <tr><th>Icône SCU active</th><td>Oui</td></tr>
                    <tr><th>Icône SCU au niveau...</th><td>Oui</td></tr>
                    <tr><th>Icône SCU par fenêtre</th><td>Oui</td></tr>
                    <tr><th>NOM SCU</th><td></td></tr>
                    <tr><th>Style visuel</th><td>Filaire 2D</td></tr>
                </table>
            </aside>

            <section class="canvas">
                <svg class="drawing" viewBox="0 0 1579 804" preserveAspectRatio="xMinYMin meet">
                    <!-- grid -->
                    <path d="M142 0v804M357 0v804M572 0v804M787 0v804M1002 0v804M1217 0v804M1432 0v804M0 82h1579M0 297h1579M0 512h1579M0 727h1579" stroke="#232a35"/>
                    <!-- polylines -->
                    <path d="M79.500 447.500h1278v108h-1278zM79.500 501.500h1278M718.500 447.500v108" fill="none" stroke="#a3a8af"/>
                    <!-- UCS icon -->
                    <g fill="none" stroke="#878c94" stroke-width="1.3">
                        <path d="M16.500 778.500h11v11h-11zM21.500 734v50H64"/>
                        <path d="M22 719l7 6v8M35 719l-6 6M75 771l10 10M85 771l-10 10"/>
                    </g>
                </svg>
                <p class="view-label">[−][Haut][Filaire 2D]</p>

                <div class="viewcube">
                    <div class="ring">
                        <b class="n">N</b><b class="w">O</b><b class="e">E</b><b class="s">S</b>
                        <button class="face">HAUT</button>
                    </div>
                    <button class="ucs">SCG</button>
                </div>

                <svg class="navbar" viewBox="0 0 30 205">
                    <path d="M4 0h26v205H0V4z" fill="#4f565d"/>
                    <g fill="none" stroke="#3d444c" stroke-width="1.4">
                        <circle cx="16" cy="27" r="11"/><circle cx="16" cy="27" r="5"/>
                        <path d="M9 76c-4-8 1-13 3-7v-8h3v-3h3v2h4v9c0 9-8 14-13 7z"/>
                        <path d="M4 86l14 14M18 86L4 100M24 105l4 5"/><circle cx="20" cy="102" r="5"/>
                        <path d="M14 125v26M5 137h22M8 132l14 10M20 130l-12 14"/>
                        <path d="M4 170h18v18H4zM10 174l8 5-8 5z"/>
                    </g>
                </svg>

                <div class="console">
                    <div class="history">
                        <p class="old">La largeur courante est de 0.0000.</p>
                        <p class="mid">Spécifiez le point suivant ou [Arc/Demi-larg/LOngueur/annUler/LArgeur]:</p>
                        <p>Spécifiez le point suivant ou [Arc/Clore/Demi-larg/LOngueur/annUler/LArgeur]: *Annuler*</p>
                    </div>
                    <div class="command">
                        <span class="grip"></span>
                        <button class="cmd-btn" aria-label="Fermer"><svg class="ico"><use href="#i-x"/></svg></button>
                        <button class="cmd-btn" aria-label="Personnaliser"><svg class="ico"><use href="#i-wrench"/></svg></button>
                        <div class="prompt">
                            <svg class="ico"><use href="#i-term"/></svg><i class="caret dark"></i>
                            <input type="text" aria-label="Commande" placeholder="Entrez une commande">
                            <i class="caret dark up"></i>
                        </div>
                    </div>
                </div>
            </section>
        </main>

        <footer class="statusbar">
            <div class="tabs layouts">
                <button class="burger" aria-label="Présentations"><svg class="ico"><use href="#i-burger"/></svg></button>
                <button class="tab active">Objet</button>
                <button class="tab">Présentation1</button>
                <i class="slash"></i>
                <button class="tab">Présentation2</button>
                <i class="slash"></i>
                <button class="add" aria-label="Nouvelle présentation"><svg class="ico"><use href="#s-plus"/></svg></button>
                <i class="slash"></i>
            </div>
            <div class="status">
                <div class="group"><button class="model">OBJET</button></div>
                <div class="group">
                    <button class="lit" aria-label="Grille"><svg class="ico"><use href="#s-grid"/></svg></button>
                    <button aria-label="Résolution"><svg class="ico"><use href="#s-snap"/></svg></button>
                    <button class="arrow" aria-label="Options"><i class="caret"></i></button>
                </div>
                <div class="group">
                    <button class="lit" aria-label="Ortho"><svg class="ico"><use href="#s-ortho"/></svg></button>
                    <button aria-label="Polaire"><svg class="ico"><use href="#s-polar"/></svg></button>
                    <button class="arrow" aria-label="Options"><i class="caret"></i></button>
                    <button aria-label="Isométrique"><svg class="ico"><use href="#s-iso"/></svg></button>
                    <button class="arrow" aria-label="Options"><i class="caret"></i></button>
                    <button class="lit" aria-label="Repérage"><svg class="ico"><use href="#s-track"/></svg></button>
                    <button class="lit" aria-label="Accrochage"><svg class="ico"><use href="#s-osnap"/></svg></button>
                    <button class="arrow" aria-label="Options"><i class="caret"></i></button>
                </div>
                <div class="group">
                    <button class="lit" aria-label="Visibilité des annotations"><svg class="ico"><use href="#s-ann1"/></svg></button>
                    <button aria-label="Echelle automatique"><svg class="ico"><use href="#s-ann2"/></svg></button>
                    <button aria-label="Annotation"><svg class="ico"><use href="#s-ann"/></svg></button>
                    <button class="ratio">1:1<i class="caret"></i></button>
                </div>
                <div class="group">
                    <button aria-label="Espace de travail"><svg class="ico"><use href="#i-gear"/></svg></button>
                    <button class="arrow" aria-label="Options"><i class="caret"></i></button>
                    <button aria-label="Moniteur"><svg class="ico"><use href="#s-plus"/></svg></button>
                </div>
                <div class="group"><button aria-label="Isoler"><svg class="ico"><use href="#s-shapes"/></svg></button></div>
                <div class="group wide">
                    <button aria-label="Tracer"><svg class="ico"><use href="#s-print"/></svg></button>
                    <button aria-label="Liens"><svg class="ico"><use href="#s-link"/></svg></button>
                </div>
                <div class="group"><button aria-label="Plein écran"><svg class="ico"><use href="#s-full"/></svg></button></div>
                <div class="group"><button aria-label="Personnalisation"><svg class="ico"><use href="#i-burger"/></svg></button></div>
            </div>
        </footer>
    </div>
</body>
</html>
```
FILE: styles.css
```
* {
    margin: 0;
    padding: 0;
    box-sizing: border-box;
}

body {
    height: 100vh;
    padding: 21px 0;
    background-color: #000;
    color: #d3d7de;
    font-family: "Open Sans", "Noto Sans", sans-serif;
    font-size: 12px;
    line-height: 16px;
    overflow: hidden;
}

a {
    color: inherit;
    text-decoration: none;
}

button,
input,
select {
    font: inherit;
    color: inherit;
    background: none;
    border: none;
    border-radius: 0;
}

.sprite {
    position: absolute;
    width: 0;
    height: 0;
}

.ico {
    width: 18px;
    height: 18px;
    flex: none;
}

.app {
    height: 100%;
    display: flex;
    flex-direction: column;
    background-color: #202733;
}

/* little triangles */
.caret {
    flex: none;
    border: 4px solid transparent;
    border-top: 5px solid #c9ced6;
    border-bottom: 0;
}

.caret.small {
    border-width: 3px;
    border-top-width: 4px;
    border-bottom: 0;
}

.caret.side {
    border: 4px solid transparent;
    border-left: 5px solid #c9ced6;
    border-right: 0;
}

.caret.dark {
    border-top-color: #4c4f54;
}

.caret.up {
    transform: rotate(180deg);
}

/* title bar */
.titlebar {
    height: 31px;
    flex: none;
    display: flex;
    align-items: center;
}

.quick,
.account {
    display: flex;
    align-items: center;
    flex: none;
}

.quick {
    padding-left: 15px;
}

.logo {
    width: 23px;
    height: 22px;
    background-color: #e2234f;
    border-left: 3px solid #a3143a;
    border-bottom: 3px solid #a3143a;
    color: #fff;
    font-size: 14px;
    font-weight: 700;
}

.slot {
    width: 24px;
    height: 24px;
    display: flex;
    align-items: center;
    justify-content: center;
}

.slot.on {
    height: 22px;
    background-color: #31506e;
    border: 1px solid #5b9bd5;
}

.drop {
    width: 12px;
    height: 22px;
    display: flex;
    align-items: center;
    justify-content: center;
}

.logo + .drop {
    width: 19px;
}

.drop.wide {
    width: 22px;
}

.drop.more {
    width: 20px;
}

.more .caret {
    box-shadow: 0 -3px 0 -1px #c9ced6;
}

.combo {
    height: 20px;
    display: flex;
    align-items: center;
    background-color: #475064;
    position: relative;
}

.combo::after {
    content: "";
    position: absolute;
    right: 2px;
    top: 8px;
    border: 4px solid transparent;
    border-top: 5px solid #c9ced6;
    border-bottom: 0;
    pointer-events: none;
}

.combo select {
    flex: 1;
    min-width: 0;
    height: 20px;
    appearance: none;
    outline: none;
}

.workspace {
    width: 178px;
    margin-left: 2px;
    padding-left: 2px;
    gap: 2px;
    background-color: #353c4a;
}

.share {
    display: flex;
    align-items: center;
    gap: 4px;
    margin-left: 2px;
    color: #67b0ea;
}

.share .ico {
    width: 16px;
    height: 16px;
}

.doc-title {
    flex: 1;
    display: flex;
    justify-content: center;
    gap: 15px;
    white-space: nowrap;
}

.search {
    width: 178px;
    height: 20px;
    margin-left: 4px;
    padding-left: 2px;
    background-color: #454e5c;
    font-style: italic;
}

.search::placeholder {
    color: #9aa1ac;
}

.login {
    display: flex;
    align-items: center;
    gap: 4px;
    margin-left: 4px;
}

.help {
    margin-left: 6px;
    padding: 0 0 0 9px;
    border-left: 1px solid #3d4552;
}

.help span {
    display: block;
    width: 17px;
    height: 17px;
    border-radius: 50%;
    background-color: #d9dde3;
    color: #202733;
    font-weight: 700;
}

.help + .drop {
    width: 18px;
}

.win-buttons {
    display: flex;
    margin-left: 62px;
}

.win-buttons button {
    width: 44px;
    height: 22px;
    display: flex;
    align-items: center;
    justify-content: center;
}

.win-buttons.doc button {
    width: 31px;
}

/* menu bar */
.menubar {
    height: 20px;
    flex: none;
    display: flex;
    justify-content: space-between;
    align-items: center;
    color: #a9afb9;
    border-bottom: 1px solid #323a46;
}

.menubar nav {
    display: flex;
    gap: 15px;
    padding-left: 9px;
}

/* ribbon */
.ribbon-tabs {
    height: 23px;
    flex: none;
    display: flex;
    align-items: flex-end;
    padding-left: 4px;
    color: #a9afb9;
}

.ribbon-tabs a {
    height: 20px;
    padding: 3px 9px 0;
}

.ribbon-tabs .active {
    background-color: #3b4453;
    color: #e4e7ec;
}

.collapse {
    height: 20px;
    display: flex;
    align-items: center;
    gap: 4px;
    padding-left: 18px;
}

.collapse span {
    width: 15px;
    height: 9px;
    background-color: #e4e7ec;
    color: #333b48;
    font-size: 8px;
    line-height: 9px;
}

.ribbon {
    height: 99px;
    flex: none;
    display: flex;
    background-color: #3b4453;
}

.panel {
    flex: none;
    display: flex;
    flex-direction: column;
    position: relative;
    border-right: 1px solid #28303d;
}

.panel-body {
    height: 77px;
    padding: 6px 0 0 3px;
    display: grid;
    align-items: start;
}

.panel.draw { width: 235px; }
.panel.modify { width: 288px; }
.panel.annotate { width: 220px; }
.panel.layers { width: 286px; }
.panel.block { width: 180px; }
.panel.props { width: 285px; }
.panel.groups { width: 79px; }
.panel.utils { width: 96px; }
.panel.clip { width: 94px; }
.panel.view { width: 60px; border-right: none; }

.draw .panel-body { grid-template-columns: 40px 53px 57px 39px 1fr; }
.modify .panel-body { grid-template-columns: 82px 80px 93px 24px; }
.annotate .panel-body { grid-template-columns: 49px 39px 1fr; }
.layers .panel-body { grid-template-columns: 70px 1fr; }
.block .panel-body { grid-template-columns: 39px 1fr; }
.props .panel-body { grid-template-columns: 77px 1fr; }
.groups .panel-body { grid-template-columns: 49px 24px; }
.utils .panel-body { grid-template-columns: 67px 24px; }
.clip .panel-body { grid-template-columns: 54px 1fr; }
.view .panel-body { grid-template-columns: 52px; }

.big {
    height: 70px;
    display: flex;
    flex-direction: column;
    align-items: center;
    text-align: center;
    white-space: nowrap;
}

.big svg,
.big .letter {
    width: 32px;
    height: 32px;
    margin: 3px 0 4px;
    flex: none;
}

.big .letter {
    font-size: 38px;
    line-height: 32px;
    font-weight: 500;
}

.big .caret {
    margin-top: 1px;
}

.big.pressed {
    background-color: #1f2937;
}

.col {
    display: flex;
    flex-direction: column;
}

.cmd {
    height: 24px;
    display: flex;
    align-items: center;
    gap: 4px;
    padding-left: 3px;
    white-space: nowrap;
}

.cmd .caret {
    margin-left: 4px;
}

.col .slot {
    height: 24px;
}

.col .slot.on {
    background-color: #2f4258;
}

.tools {
    display: flex;
}

.layers .combo {
    margin: 2px 6px 2px 0;
    padding-left: 2px;
    gap: 1px;
}

.swatch {
    width: 14px;
    height: 14px;
    flex: none;
    background-color: #fff;
}

.swatch.black {
    margin: 0 4px;
    background-color: #000;
    border: 1px solid #9aa1ac;
}

.stroke {
    width: 65px;
    height: 1px;
    flex: none;
    background-color: #c9ced6;
}

.prop-line {
    height: 24px;
    display: flex;
    align-items: center;
    gap: 2px;
    padding: 0 3px;
}

.prop-line .combo {
    flex: 1;
    padding-left: 6px;
    gap: 2px;
}

.panel-title {
    height: 22px;
    display: flex;
    align-items: center;
    justify-content: center;
    gap: 7px;
    padding-top: 3px;
}

.props .panel-title {
    padding-right: 10px;
}

.view .panel-title {
    justify-content: flex-start;
    padding-left: 6px;
}

.launcher {
    position: absolute;
    right: 2px;
    bottom: 4px;
    width: 10px;
    height: 10px;
    display: flex;
}

/* drawing and layout tabs */
.tabs {
    height: 26px;
    flex: none;
    display: flex;
    align-items: center;
}

.tabs.files {
    padding-top: 4px;
}

.burger {
    width: 44px;
    height: 22px;
    padding-left: 16px;
    display: flex;
    align-items: center;
}

.slash {
    width: 1px;
    height: 16px;
    margin: 0 2px;
    background-color: #465060;
    transform: skewX(-22deg);
}

.tab {
    height: 100%;
    padding: 1px 10px 0;
    position: relative;
    z-index: 0;
    display: flex;
    align-items: center;
}

.tab.active {
    padding: 1px 14px 0;
    color: #fff;
    font-weight: 700;
}

.tab.active::before {
    content: "";
    position: absolute;
    inset: 0 3px;
    z-index: -1;
    background-color: #3b4453;
    transform: skewX(-20deg);
}

.tab-close {
    width: 12px;
    height: 12px;
    margin-left: 7px;
}

.add {
    padding: 0 8px;
    display: flex;
}

/* properties palette */
.workspace-area {
    flex: 1;
    min-height: 0;
    display: flex;
    border-top: 5px solid #3b4453;
    border-bottom: 5px solid #353e4b;
}

.palette {
    width: 341px;
    flex: none;
    background-color: #3b4453;
    padding-top: 2px;
}

.palette h2 {
    height: 21px;
    margin-left: 2px;
    margin-right: 3px;
    padding-left: 5px;
    background-color: #2c3340;
    font-size: 12px;
    line-height: 21px;
    font-weight: 400;
}

.palette h2::before {
    content: "";
    display: inline-block;
    width: 3px;
    height: 10px;
    margin-right: 6px;
    border: 1px solid #7b8491;
    border-width: 0 1px;
}

.palette-tools {
    display: flex;
    align-items: center;
    gap: 3px;
    padding: 14px 12px 6px 19px;
}

.palette-tools .combo {
    flex: 1;
    margin-right: 3px;
    padding-left: 2px;
}

.palette-tools button {
    display: flex;
}

.palette h3 {
    height: 20px;
    margin: 0 15px 0 18px;
    padding: 0 7px;
    display: flex;
    align-items: center;
    justify-content: space-between;
    background-color: #2b3240;
    color: #fff;
    font-size: 12px;
}

.palette table {
    width: 291px;
    margin: 0 0 4px 35px;
    border-collapse: separate;
    border-spacing: 0;
    border-right: 1px solid #364050;
    table-layout: fixed;
}

.palette th,
.palette td {
    height: 20px;
    padding-left: 5px;
    border-top: 1px solid #364050;
    border-left: 1px solid #364050;
    font-weight: 400;
    text-align: left;
    white-space: nowrap;
}

.palette th {
    width: 130px;
    color: #bcc2cb;
}

.palette td.off {
    color: #88909c;
}

.palette td > span {
    display: inline-block;
    vertical-align: middle;
    margin-right: 5px;
}

.palette td .swatch {
    margin-right: 7px;
}

/* drawing area */
.canvas {
    flex: 1;
    min-width: 0;
    position: relative;
    overflow: hidden;
    background-color: #1f2530;
}

.drawing {
    position: absolute;
    inset: 0;
    width: 100%;
}

.view-label {
    position: absolute;
    left: 3px;
    top: 4px;
}

.viewcube {
    position: absolute;
    right: 20px;
    top: 22px;
    width: 120px;
    display: flex;
    flex-direction: column;
    align-items: center;
    gap: 27px;
}

.ring {
    width: 120px;
    height: 120px;
    display: flex;
    align-items: center;
    justify-content: center;
    position: relative;
    border: 13px solid #3e464f;
    border-radius: 50%;
}

.ring b {
    position: absolute;
    color: #c5c8cd;
    font-size: 20px;
    line-height: 20px;
}

.ring .n { top: -19px; }
.ring .s { bottom: -19px; }
.ring .w { left: -17px; }
.ring .e { right: -15px; }

.face {
    width: 52px;
    height: 52px;
    background-color: #c0c1c5;
    border: 10px solid #c9cacc;
    color: #43474d;
    font-weight: 700;
    display: flex;
    align-items: center;
    justify-content: center;
}

.ucs {
    width: 46px;
    height: 17px;
    padding-left: 4px;
    border-radius: 3px;
    background-color: #a4a6b2;
    border: 1px solid #b9bbc5;
    color: #3e424a;
    font-family: "Liberation Sans", sans-serif;
    font-size: 11px;
    line-height: 14px;
    text-align: left;
}

.navbar {
    position: absolute;
    right: 0;
    top: 206px;
    width: 30px;
    height: 205px;
}

.console {
    position: absolute;
    left: 63px;
    right: 61px;
    bottom: 0;
    font-family: "Liberation Mono", monospace;
}

.history {
    display: flex;
    flex-direction: column;
    align-items: flex-start;
    gap: 5px;
    padding: 0 0 2px 63px;
}

.history p {
    padding: 0 1px;
    background-color: #62666c;
    color: #eceef1;
    border-radius: 2px;
}

.history .old {
    background-color: #484d55;
    color: #a7abb1;
}

.history .mid {
    background-color: #50555c;
    color: #c9ccd1;
}

.command {
    height: 25px;
    display: flex;
    align-items: center;
    background-color: #272e39;
}

.grip {
    width: 6px;
    height: 18px;
    margin-left: 2px;
    border-left: 2px dotted #7b8491;
    border-right: 2px dotted #7b8491;
}

.cmd-btn {
    width: 25px;
    height: 25px;
    display: flex;
    align-items: center;
    justify-content: center;
}

.cmd-btn .ico {
    width: 16px;
    height: 16px;
}

.prompt {
    flex: 1;
    height: 25px;
    display: flex;
    align-items: center;
    gap: 2px;
    padding: 0 4px 0 3px;
    background-color: #b8babf;
}

.prompt input {
    flex: 1;
    padding-left: 4px;
    font-style: italic;
    outline: none;
}

.prompt input::placeholder {
    color: #5d6066;
}

/* status bar */
.statusbar {
    height: 25px;
    flex: none;
    display: flex;
    justify-content: space-between;
}

.layouts {
    height: 25px;
}

.layouts .tab {
    padding-left: 8px;
    padding-right: 8px;
}

.layouts .tab.active {
    padding-left: 14px;
    padding-right: 14px;
}

.status {
    display: flex;
    gap: 4px;
    padding-top: 2px;
}

.group {
    display: flex;
    background-color: #313947;
}

.group button {
    width: 23px;
    height: 23px;
    display: flex;
    align-items: center;
    justify-content: center;
}

.group .lit {
    background-color: #5b8fcb;
}

.group .arrow {
    width: 18px;
}

.group .model {
    width: 40px;
    color: #e4e7ec;
}

.group .ratio {
    width: 34px;
    gap: 4px;
}

.group.wide button {
    width: 28px;
}
```
